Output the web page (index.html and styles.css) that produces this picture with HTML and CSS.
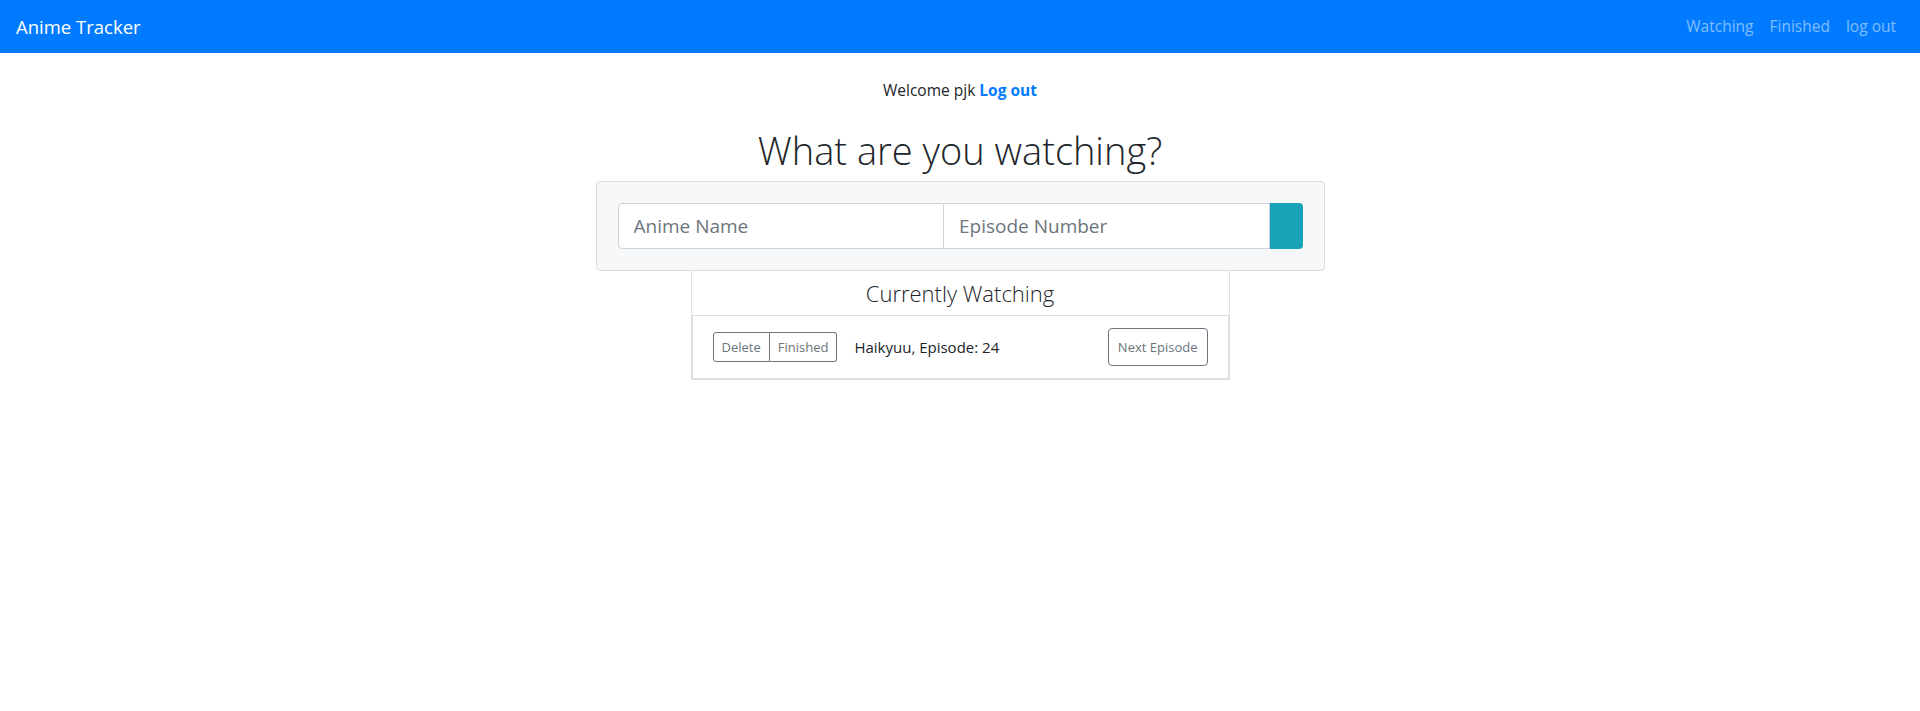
FILE: index.html
```html
<!DOCTYPE html>
<html lang="en">
<head>
<meta charset="utf-8">
<title>Anime Tracker</title>
<link rel="stylesheet" href="styles.css">
</head>
<body>
<nav class="navbar">
  <a class="brand" href="#">Anime Tracker</a>
  <ul class="nav-links">
    <li><a href="#">Watching</a></li>
    <li><a href="#">Finished</a></li>
    <li><a href="#">log out</a></li>
  </ul>
</nav>
<main class="main">
  <p class="welcome">Welcome pjk <a href="#" class="logout">Log out</a></p>
  <h1 class="title">What are you watching?</h1>
  <form class="search-box">
    <div class="input-group">
      <input class="field" type="text" placeholder="Anime Name">
      <input class="field field-ep" type="text" placeholder="Episode Number">
      <button class="add-btn" type="button"></button>
    </div>
  </form>
  <section class="card">
    <h2 class="card-header">Currently Watching</h2>
    <ul class="list">
      <li class="list-item">
        <div class="btn-group">
          <button class="btn-sm" type="button">Delete</button>
          <button class="btn-sm" type="button">Finished</button>
        </div>
        <span class="item-text">Haikyuu, Episode: 24</span>
        <button class="btn-next" type="button">Next Episode</button>
      </li>
    </ul>
  </section>
</main>
</body>
</html>
```
FILE: styles.css
```css
* { box-sizing: border-box; }
html, body { margin: 0; padding: 0; }
body {
  font-family: "Open Sans", "Noto Sans", "Liberation Sans", sans-serif;
  font-size: 16px;
  line-height: 1.5;
  color: #212529;
  background: #fff;
}
a { text-decoration: none; }

.navbar {
  height: 53px;
  background: #007bff;
  display: flex;
  align-items: center;
  justify-content: space-between;
  padding: 0 16px;
}
.brand {
  color: #fff;
  font-size: 18.5px;
  line-height: 30px;
}
.nav-links {
  list-style: none;
  margin: 0;
  padding: 0;
  display: flex;
}
.nav-links a {
  display: block;
  padding: 0 8px;
  color: rgba(255, 255, 255, 0.5);
  font-size: 15.5px;
}

.main {
  display: flex;
  flex-direction: column;
  align-items: center;
  text-align: center;
}
.welcome {
  margin: 25px 0 0;
  font-size: 15.5px;
  line-height: 24px;
}
.logout {
  color: #007bff;
  font-weight: 700;
}
.title {
  margin: 24px 0 7px;
  font-size: 38px;
  font-weight: 300;
  line-height: 48px;
}
.search-box {
  width: 729px;
  padding: 21px;
  background: #f7f8fa;
  border: 1px solid #dadde1;
  border-radius: 4px;
  margin: 0;
}
.input-group {
  display: flex;
  height: 46px;
}
.field {
  flex: 1;
  min-width: 0;
  height: 46px;
  border: 1px solid #ced4da;
  background: #fff;
  font-family: inherit;
  font-size: 19px;
  padding: 0 15px;
  color: #495057;
  outline: none;
}
.field::placeholder { color: #6c757d; }
.field:first-child { border-radius: 4px 0 0 4px; }
.field-ep { border-left: 0; }
.add-btn {
  width: 33px;
  height: 46px;
  border: 0;
  background: #17a2b8;
  border-radius: 0 4px 4px 0;
  padding: 0;
}
.card {
  width: 539px;
  border: 1px solid #dfdfdf;
  margin-top: -1px;
  text-align: left;
}
.card-header {
  margin: 0;
  height: 45px;
  border-bottom: 1px solid #dfdfdf;
  font-size: 22px;
  font-weight: 300;
  line-height: 44px;
  text-align: center;
}
.list {
  list-style: none;
  margin: 0;
  padding: 0;
}
.list-item {
  display: flex;
  align-items: center;
  padding: 12px 20px 12px;
  border: 1px solid #dfdfdf;
  border-top: 0;
}
.btn-group {
  display: flex;
}
.btn-sm {
  height: 30px;
  font-family: inherit;
  font-size: 13px;
  color: #6c757d;
  background: #fff;
  border: 1px solid #6c757d;
  padding: 0 8px;
}
.btn-sm:first-child { border-radius: 3px 0 0 3px; }
.btn-sm:last-child { border-radius: 0 3px 3px 0; border-left: 0; }
.item-text {
  margin-left: 17px;
  font-size: 15px;
  flex: 1;
}
.btn-next {
  height: 38px;
  font-family: inherit;
  font-size: 13px;
  color: #6c757d;
  background: #fff;
  border: 1px solid #6c757d;
  border-radius: 4px;
  padding: 0 9px;
}
```
